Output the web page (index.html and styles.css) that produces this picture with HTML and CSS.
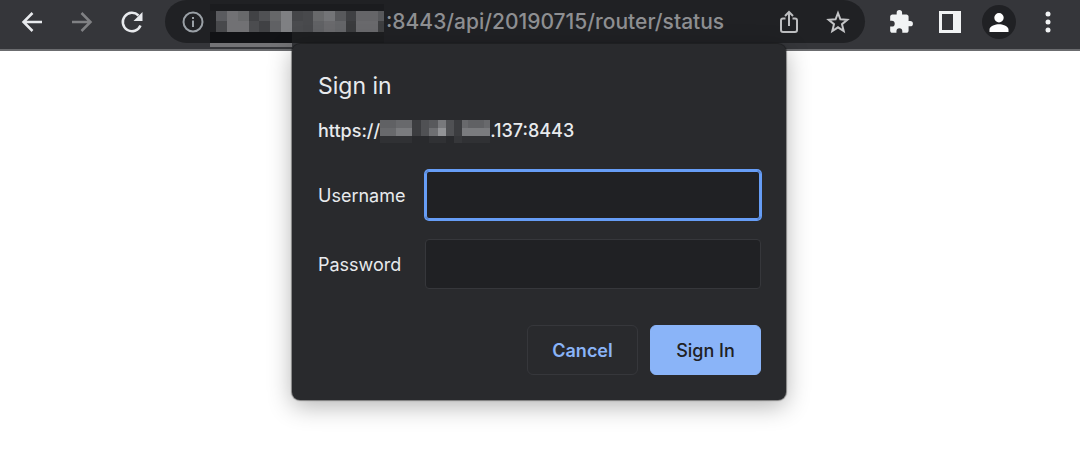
FILE: index.html
```html
<!DOCTYPE html>
<html lang="en">
<head>
    <meta charset="UTF-8">
    <meta name="viewport" content="width=device-width, initial-scale=1.0">
    <title>Sign in</title>
    <link rel="stylesheet" href="styles.css">
</head>
<body>
    <header class="toolbar">
        <button class="tool nav" type="button" aria-label="Back">
            <svg width="24" height="24" viewBox="0 0 24 24" fill="none" stroke="#e8eaed" stroke-width="2.500"><path d="M22 12H4M12.500 3L3.500 12l9 9"/></svg>
        </button>
        <button class="tool nav" type="button" aria-label="Forward" disabled>
            <svg width="24" height="24" viewBox="0 0 24 24" fill="none" stroke="#808184" stroke-width="2.500"><path d="M2 12h18M11.500 3l9 9-9 9"/></svg>
        </button>
        <button class="tool nav" type="button" aria-label="Reload">
            <svg width="24" height="24" viewBox="0 0 24 24"><path d="M20.500 15.500A9.200 9.200 0 1 1 18.500 5.500" fill="none" stroke="#e8eaed" stroke-width="2.500"/><path d="M22.500 2v9h-9z" fill="#e8eaed"/></svg>
        </button>

        <div class="address-bar">
            <button class="site-info" type="button" aria-label="Site information">
                <svg width="22" height="22" viewBox="0 0 22 22"><circle cx="11" cy="11" r="9.500" fill="none" stroke="#9aa0a6" stroke-width="2"/><path d="M10 9.500h2V16h-2zM10 6h2v2h-2z" fill="#9aa0a6"/></svg>
            </button>
            <svg class="masked-host" width="174" height="47" viewBox="0 0 174 47" shape-rendering="crispEdges" aria-hidden="true">
                <path fill="#1b1c1f" d="M0 4h174v7H0z"/>
                <path fill="#111215" d="M0 32h82v11H0z"/>
                <path fill="#1d1e20" d="M82 32h92v11H82z"/>
                <path fill="#737376" d="M0 43h82v4H0z"/>
                <path fill="#5a5b5f" d="M6 11h11v10H6z"/><path fill="#48494c" d="M6 21h11v11H6z"/>
                <path fill="#717174" d="M17 11h11v21H17z"/>
                <path fill="#68696b" d="M28 11h11v10H28z"/><path fill="#717174" d="M28 21h11v11H28z"/>
                <path fill="#414245" d="M39 11h10v10H39z"/><path fill="#4b4c4f" d="M39 21h10v11H39z"/>
                <path fill="#505154" d="M49 11h11v10H49z"/><path fill="#404144" d="M49 21h11v11H49z"/>
                <path fill="#666769" d="M60 11h11v10H60z"/><path fill="#606164" d="M60 21h11v11H60z"/>
                <path fill="#7f8083" d="M71 11h11v21H71z"/>
                <path fill="#454649" d="M82 11h11v10H82z"/><path fill="#4a4b4e" d="M82 21h11v11H82z"/>
                <path fill="#48494c" d="M93 11h10v21H93z"/>
                <path fill="#68696b" d="M103 11h11v10H103z"/><path fill="#606164" d="M103 21h11v11H103z"/>
                <path fill="#737477" d="M114 11h11v10H114z"/><path fill="#69696c" d="M114 21h11v11H114z"/>
                <path fill="#58595c" d="M125 11h11v10H125z"/><path fill="#646568" d="M125 21h11v11H125z"/>
                <path fill="#3f4043" d="M136 11h10v10H136z"/><path fill="#3a3b3d" d="M136 21h10v11H136z"/>
                <path fill="#656568" d="M146 11h22v10H146z"/><path fill="#69696c" d="M146 21h22v11H146z"/>
                <path fill="#57585b" d="M168 11h6v10H168z"/><path fill="#3e3f41" d="M168 21h6v11H168z"/>
            </svg>
            <input class="address" type="text" aria-label="Address" value=":8443/api/20190715/router/status" spellcheck="false">
            <button class="tool" type="button" aria-label="Share">
                <svg width="24" height="24" viewBox="0 0 24 24" fill="none" stroke="#bdbec0" stroke-width="2"><path d="M8.500 8.500H6a2 2 0 0 0-2 2V20a2 2 0 0 0 2 2h12a2 2 0 0 0 2-2v-9.500a2 2 0 0 0-2-2h-2.500M12 16V2.500M8 6l4-4 4 4"/></svg>
            </button>
            <button class="tool" type="button" aria-label="Bookmark this page">
                <svg width="24" height="24" viewBox="0 0 24 24" fill="none" stroke="#c4c5c7" stroke-width="2"><path d="M12 3l2.400 6.300 6.900.5-5.300 4.400 1.700 6.800-5.700-3.700L6.300 21 8 14.200 2.700 9.800l6.900-.5z"/></svg>
            </button>
        </div>

        <button class="tool" type="button" aria-label="Extensions">
            <svg width="26" height="26" viewBox="0 0 24 24" fill="#f1f3f4"><path d="M20.500 11H19V7c0-1.100-.9-2-2-2h-4V3.500a2.500 2.500 0 0 0-5 0V5H4c-1.100 0-2 .9-2 2v3.800h1.500a2.700 2.700 0 0 1 0 5.400H2V20c0 1.100.9 2 2 2h3.800v-1.500a2.700 2.700 0 0 1 5.400 0V22H17c1.100 0 2-.9 2-2v-4h1.500a2.500 2.500 0 0 0 0-5z"/></svg>
        </button>
        <button class="tool" type="button" aria-label="Side panel">
            <svg width="22" height="22" viewBox="0 0 22 22"><path fill="#f1f3f4" fill-rule="evenodd" d="M0 0h22v22H0zM3 3v16h11V3z"/></svg>
        </button>
        <button class="tool" type="button" aria-label="Profile">
            <svg width="34" height="34" viewBox="0 0 34 34"><circle cx="17" cy="17" r="17" fill="#202124"/><path fill="#fff" d="M17 8a4.700 4.700 0 1 1 0 9.400A4.700 4.700 0 0 1 17 8zM7.500 27v-2.500c0-3.500 6.300-5.300 9.500-5.300s9.500 1.800 9.500 5.300V27z"/></svg>
        </button>
        <button class="tool" type="button" aria-label="Menu">
            <svg width="22" height="22" viewBox="0 0 22 22" fill="#f1f3f4"><circle cx="11" cy="3" r="2.500"/><circle cx="11" cy="11" r="2.500"/><circle cx="11" cy="19" r="2.500"/></svg>
        </button>
    </header>

    <form class="dialog" role="dialog" aria-labelledby="dialog-title">
        <h1 class="dialog-title" id="dialog-title">Sign in</h1>
        <p class="origin">
            <span>https://</span>
            <svg width="110" height="24" viewBox="0 0 110 24" shape-rendering="crispEdges" aria-hidden="true">
                <path fill="#606164" d="M0 0h16v8H0zM88 0h16v8H88z"/>
                <path fill="#68696c" d="M16 0h16v8H16zM0 8h16v8H0zM80 0h8v8h-8zM104 0h6v8h-6z"/>
                <path fill="#7a7b7e" d="M16 8h16v8H16zM82 8h28v8H82z"/>
                <path fill="#3c3d40" d="M32 0h9v16h-9zM74 0h8v16h-8z"/>
                <path fill="#505154" d="M41 0h8v16h-8zM66 0h8v16h-8z"/>
                <path fill="#58595c" d="M49 0h9v8h-9z"/>
                <path fill="#6e6f72" d="M49 8h9v8h-9z"/>
                <path fill="#78797c" d="M58 0h8v8h-8z"/>
                <path fill="#929396" d="M58 8h8v8h-8z"/>
                <path fill="#303134" d="M0 16h32v7H0zM49 16h17v7H49zM82 16h28v7H82z"/>
                <path fill="#36373a" d="M74 16h8v7h-8z"/>
            </svg>
            <span>.137:8443</span>
        </p>
        <div class="fields">
            <label for="username">Username</label>
            <input class="field" id="username" type="text" autocomplete="off" autofocus>
            <label for="password">Password</label>
            <input class="field" id="password" type="password">
        </div>
        <div class="actions">
            <button class="btn" type="button">Cancel</button>
            <button class="btn btn-primary" type="submit">Sign In</button>
        </div>
    </form>
</body>
</html>
```

FILE: styles.css
```css
:root {
    --toolbar-bg: #35363a;
    --address-bg: #202124;
    --dialog-bg: #292a2d;
    --border: #36373b;
    --text-color: #e8eaed;
    --accent: #8ab4f8;
    --focus: #669df6;
}

* {
    box-sizing: border-box;
}

body {
    font-family: Inter, 'Helvetica Neue', Arial, sans-serif;
    background-color: #fff;
    color: var(--text-color);
    margin: 0;
}

button,
input {
    font-family: inherit;
}

.toolbar {
    display: flex;
    align-items: flex-start;
    padding: 0 8px 6px 7px;
    background-color: var(--toolbar-bg);
    border-bottom: 2px solid #6b6c6f;
}

.tool,
.site-info {
    display: flex;
    align-items: center;
    justify-content: center;
    flex: none;
    width: 49px;
    height: 43px;
    padding: 0;
    border: 0;
    background: none;
}

.nav {
    width: 50px;
}

.address-bar {
    display: flex;
    flex: 1;
    min-width: 0;
    height: 43px;
    margin: 0 11px 0 8px;
    padding: 0 3px 0 17px;
    border-radius: 22px;
    background-color: var(--address-bg);
}

.site-info {
    width: 22px;
    margin-right: 6px;
}

.masked-host {
    flex: none;
}

.address {
    flex: 1;
    min-width: 0;
    padding: 0 0 0 2px;
    border: 0;
    outline: 0;
    background: none;
    color: #8e8f92;
    font-size: 21px;
    font-weight: 500;
}

/* hangs from the address bar, over the page */
.dialog {
    position: absolute;
    top: 44px;
    left: 0;
    right: 2px;
    width: 494px;
    margin: 0 auto;
    padding: 26px 25px 25px 26px;
    border-radius: 8px;
    background-color: var(--dialog-bg);
    box-shadow: 0 0 1px 1px rgba(0, 0, 0, 0.4), 0 6px 24px rgba(0, 0, 0, 0.3);
    font-size: 18px;
}

.dialog-title {
    margin: 0 0 16px;
    font-size: 23px;
    font-weight: 400;
    line-height: 32px;
}

.origin {
    display: flex;
    align-items: flex-end;
    margin: 0 0 26px;
    font-weight: 500;
    line-height: 26px;
}

.fields {
    display: grid;
    grid-template-columns: 87px 1fr;
    align-items: center;
    gap: 19px 20px;
}

.field {
    width: 100%;
    min-width: 0;
    height: 50px;
    padding: 0 12px;
    border: 1px solid var(--border);
    border-radius: 4px;
    background-color: var(--address-bg);
    color: var(--text-color);
    caret-color: transparent;
    font-size: 18px;
}

.field:focus {
    border-color: var(--focus);
    outline: 0;
    box-shadow: 0 0 0 1px var(--focus), inset 0 0 0 1px var(--focus);
}

.actions {
    display: flex;
    justify-content: flex-end;
    gap: 12px;
    margin-top: 36px;
}

.btn {
    min-width: 111px;
    height: 50px;
    padding: 0 20px;
    border: 1px solid var(--border);
    border-radius: 6px;
    background-color: transparent;
    color: var(--accent);
    font-size: 18px;
    font-weight: 600;
}

.btn-primary {
    border-color: var(--accent);
    background-color: var(--accent);
    color: var(--address-bg);
    font-weight: 500;
}
```
